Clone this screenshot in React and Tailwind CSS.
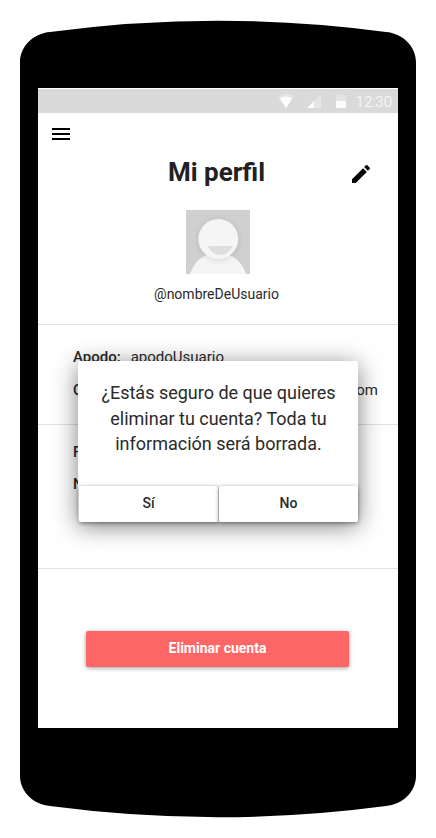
import React from "react";

function PhoneBody() {
  return (
    <svg className="absolute inset-0" width="436" height="838" viewBox="0 0 436 838" aria-hidden="true">
      <path d="M20 62C20 46 34 33.3 50 32Q134 20.7 218 20.7Q302 20.7 386 32C402 33.3 416 46 416 62V776C416 792 402 804.700 386 806Q302 817.200 218 817.200Q134 817.200 50 806C34 804.700 20 792 20 776Z" fill="#000" />
    </svg>
  );
}

function StatusBar() {
  return (
    <div className="mt-px flex h-6 items-center justify-end bg-[#dadada] pr-[6px] text-white">
      <svg className="mr-[12px]" width="18" height="24" viewBox="0 0 18 24">
        <path d="M1.300 7.400Q9 2.200 16.700 7.400L9 19Z" fill="#fff" fillOpacity=".3" />
        <path d="M2.700 9.500Q9 5.600 15.300 9.500L9 19Z" fill="#fff" fillOpacity=".9" />
      </svg>
      <svg className="mr-[15px]" width="14" height="24" viewBox="0 0 14 24">
        <path d="M0 19L14 5V19Z" fill="#fff" fillOpacity=".3" />
        <path d="M0 19L7 12V19Z" fill="#fff" fillOpacity=".9" />
      </svg>
      <svg className="mr-[10px]" width="10" height="24" viewBox="0 0 10 24">
        <path d="M0 12V8Q0 6 2.200 5.600Q5 4.500 7.800 5.600Q10 6 10 8V12Z" fill="#fff" fillOpacity=".3" />
        <path d="M0 12H10V18Q10 19 9 19H1Q0 19 0 18Z" fill="#fff" fillOpacity=".9" />
      </svg>
      <span className="pt-[2px] text-[15px] leading-[22px] font-light">12:30</span>
    </div>
  );
}

function Avatar() {
  return (
    <svg className="mx-auto block" width="64" height="64" viewBox="0 0 64 64">
      <defs>
        <filter id="headShadow" x="-30%" y="-30%" width="160%" height="160%">
          <feDropShadow dx="0" dy="1" stdDeviation="3" floodColor="#000" floodOpacity=".13" />
        </filter>
      </defs>
      <rect width="64" height="64" fill="#d0d0d0" />
      <path d="M4 64C9 49 20 43 32 43S55 49 60 64Z" fill="#f5f5f5" />
      <circle cx="32.300" cy="29" r="19.900" fill="#f5f5f5" filter="url(#headShadow)" />
      <path d="M21.500 36H47Q42 45 34.200 45Q26.500 45 21.500 36Z" fill="#dedede" />
    </svg>
  );
}

function DialogButton({ children }) {
  return (
    <button className="h-9 flex-1 rounded-[2px] bg-white text-center text-[14px] leading-9 font-medium shadow-[0_1px_4px_rgba(0,0,0,0.45)]">
      <span className="block h-9 leading-[34px]">{children}</span>
    </button>
  );
}

function ConfirmDialog() {
  return (
    <div className="absolute top-[273px] left-[40px] flex h-[161px] w-[280px] flex-col justify-between rounded-[2px] bg-white shadow-[0_4px_25px_rgba(0,0,0,0.5)]">
      <p className="pt-[19px] pl-px text-center text-[18px] leading-[25.500px]">
        ¿Estás seguro de que quieres<br />eliminar tu cuenta? Toda tu<br />información será borrada.
      </p>
      <div className="flex gap-px pl-px">
        <DialogButton>Sí</DialogButton>
        <DialogButton>No</DialogButton>
      </div>
    </div>
  );
}

export default function App() {
  return (
    <div className="relative h-[838px] w-[436px] overflow-hidden bg-white pt-[88px] pl-[38px] font-['Roboto',sans-serif] text-[#2a2a2a]">
      <PhoneBody />
      <main className="relative flex h-[640px] w-[360px] flex-col overflow-hidden bg-white">
        <StatusBar />
        <header className="h-[97px] shrink-0">
          <svg className="mt-[9px] ml-[11px] block" width="24" height="24" viewBox="0 0 24 24" fill="#000">
            <path d="M3 18h18v-2H3v2zm0-5h18v-2H3v2zm0-7v2h18V6H3z" />
          </svg>
          <div className="mt-[10px] flex items-center pr-[25px] pl-[46px]">
            <h1 className="flex-1 text-center text-[26px] leading-[32px] font-bold text-[#212121]">Mi perfil</h1>
            <svg className="mt-[3px]" width="24" height="24" viewBox="0 0 24 24" fill="#000">
              <path d="M3 17.250V21h3.750L17.810 9.940l-3.750-3.750L3 17.250zM20.710 7.040a1 1 0 0 0 0-1.410l-2.340-2.340a1 1 0 0 0-1.410 0l-1.830 1.830 3.750 3.750 1.830-1.830z" />
            </svg>
          </div>
        </header>
        <section className="h-[115px] shrink-0 border-b border-[#dfdfdf]">
          <Avatar />
          <p className="mt-[10px] pr-[3px] text-center text-[14px] leading-5">@nombreDeUsuario</p>
        </section>
        <section className="h-[100px] shrink-0 border-b border-[#dfdfdf] pt-[16px] pr-[20px] pl-[35px] text-[15px] leading-8">
          <div className="flex gap-[10px]"><b className="font-medium">Apodo:</b><span>apodoUsuario</span></div>
          <div className="flex justify-between pt-px"><b className="font-medium">C</b><span>om</span></div>
        </section>
        <section className="h-[144px] shrink-0 border-b border-[#dfdfdf] pt-[11px] pl-[35px] text-[15px] leading-8 font-medium">
          <p>F</p>
          <p>N</p>
        </section>
        <button className="mt-[62px] ml-[48px] h-9 w-[263px] shrink-0 rounded-[2px] bg-[#ff6666] text-center text-[14px] font-bold text-white shadow-[0_1px_4px_rgba(0,0,0,0.4)]">
          <span className="block h-9 leading-[34px]">Eliminar cuenta</span>
        </button>
        <ConfirmDialog />
      </main>
    </div>
  );
}
